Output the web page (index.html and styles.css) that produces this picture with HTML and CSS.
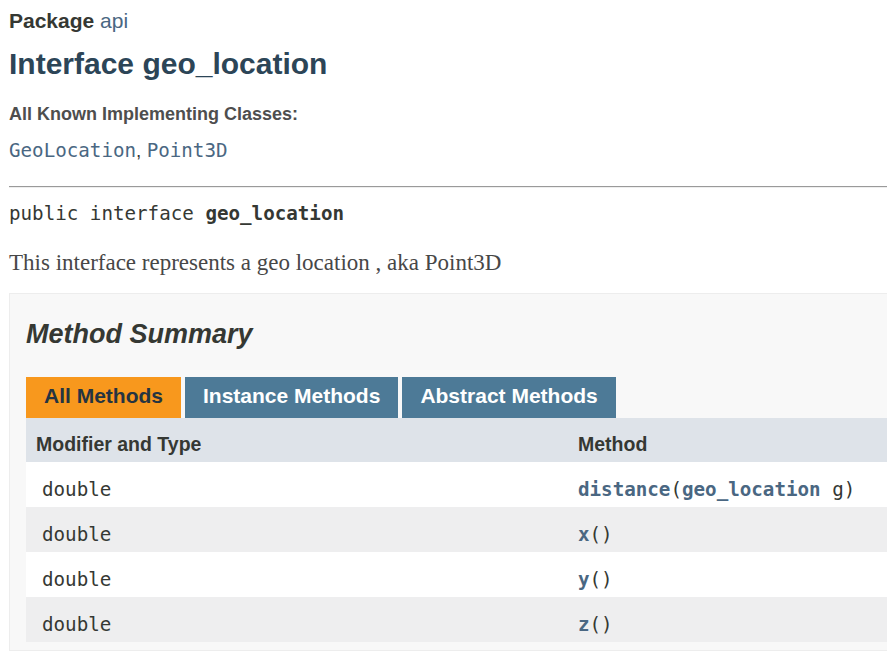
FILE: index.html
```html
<!DOCTYPE html>
<html lang="en">
<head>
<meta charset="utf-8">
<title>geo_location</title>
<link rel="stylesheet" href="styles.css">
</head>
<body>
<main class="page">
  <div class="sub-title"><span class="label">Package</span> <a class="link" href="#">api</a></div>
  <h1 class="title">Interface geo_location</h1>
  <dl class="notes">
    <dt>All Known Implementing Classes:</dt>
    <dd><a class="code-link" href="#">GeoLocation</a>, <a class="code-link" href="#">Point3D</a></dd>
  </dl>
  <hr class="rule">
  <pre class="signature">public interface <b>geo_location</b></pre>
  <p class="block">This interface represents a geo location , aka Point3D</p>

  <section class="summary">
    <h2 class="summary-title">Method Summary</h2>
    <div class="tabs">
      <button class="tab active">All Methods</button>
      <button class="tab">Instance Methods</button>
      <button class="tab">Abstract Methods</button>
    </div>
    <div class="table">
      <div class="th first">Modifier and Type</div>
      <div class="th second">Method</div>

      <div class="td first odd">double</div>
      <div class="td second odd"><a class="m" href="#">distance</a>(<a class="m" href="#">geo_location</a>&nbsp;g)</div>

      <div class="td first even">double</div>
      <div class="td second even"><a class="m" href="#">x</a>()</div>

      <div class="td first odd">double</div>
      <div class="td second odd"><a class="m" href="#">y</a>()</div>

      <div class="td first even">double</div>
      <div class="td second even"><a class="m" href="#">z</a>()</div>
    </div>
  </section>
</main>
</body>
</html>
```

FILE: styles.css
```css
html, body {
  margin: 0;
  padding: 0;
  overflow: hidden;
  background: #ffffff;
}

body {
  font-family: "Liberation Sans", Arial, sans-serif;
  color: #353833;
}

.page {
  width: 1100px;
  padding-left: 9px;
}

a {
  text-decoration: none;
}

.sub-title {
  margin-top: 9px;
  font-size: 21px;
  line-height: 24px;
}

.sub-title .label {
  font-weight: bold;
  color: #353833;
}

.link {
  color: #4a6782;
}

.title {
  margin: 13px 0 0;
  font-size: 30px;
  line-height: 36px;
  font-weight: bold;
  color: #2c4557;
}

.notes {
  margin: 0;
}

.notes dt {
  margin-top: 21px;
  font-size: 18px;
  line-height: 22px;
  font-weight: bold;
  color: #4e4e4e;
}

.notes dd {
  margin: 14px 0 0;
  height: 24px;
  font-size: 19px;
  line-height: 24px;
  color: #353833;
}

.code-link {
  font-family: "DejaVu Sans Mono", monospace;
  font-size: 19.2px;
  color: #4a6782;
}

.rule {
  margin: 23px 0 0;
  height: 0;
  border: 0;
  border-top: 1px solid #9a9a9a;
  border-bottom: 1px solid #eeeeee;
}

.signature {
  margin: 14px 0 0;
  font-family: "DejaVu Sans Mono", monospace;
  font-size: 19.2px;
  line-height: 24px;
  color: #353833;
}

.block {
  margin: 24px 0 0;
  font-family: "Liberation Serif", "Times New Roman", serif;
  font-size: 23px;
  line-height: 26px;
  color: #474747;
}

.summary {
  margin-top: 17px;
  background: #f8f8f8;
  border: 1px solid #ededed;
  padding: 0 0 8px 16px;
}

.summary-title {
  margin: 24px 0 27px;
  font-size: 27px;
  line-height: 32px;
  font-style: italic;
  font-weight: bold;
  color: #353833;
}

.tabs {
  display: flex;
  gap: 4px;
}

.tab {
  border: 0;
  margin: 0;
  padding: 7px 18px 10px;
  font-family: "Liberation Sans", Arial, sans-serif;
  font-size: 21px;
  line-height: 24px;
  font-weight: bold;
  background: #4d7a97;
  color: #ffffff;
}

.tab.active {
  background: #f8981d;
  color: #253441;
}

.table {
  display: grid;
  grid-template-columns: 541px 1fr;
}

.th {
  background: #dee3e9;
  padding: 14px 0 6px 10px;
  font-size: 19.5px;
  line-height: 24px;
  font-weight: bold;
  color: #353833;
}

.th.second {
  padding-left: 11px;
}

.td {
  padding: 16px 0 5px 16px;
  font-family: "DejaVu Sans Mono", monospace;
  font-size: 19.2px;
  line-height: 24px;
  color: #353833;
}

.td.second {
  padding-left: 11px;
}

.td.odd {
  background: #ffffff;
}

.td.even {
  background: #eeeeef;
}

.m {
  font-weight: bold;
  color: #4a6782;
}
```
